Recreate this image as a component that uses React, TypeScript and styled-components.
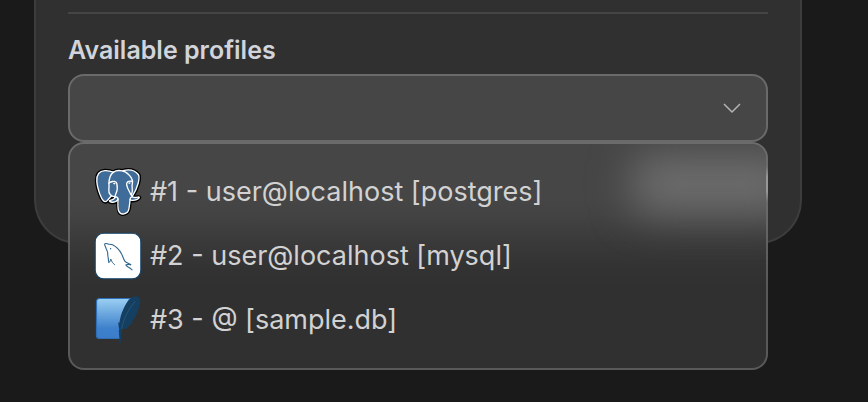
import React, { useState } from "react";
import styled, { createGlobalStyle } from "styled-components";

const GlobalStyle = createGlobalStyle`
  *, *::before, *::after { box-sizing: border-box; }
  body {
    margin: 0;
    background: #1a1a1a;
    color: #d2d2d2;
    font-family: Inter, "Liberation Sans", sans-serif;
  }
`;

const Page = styled.main`
  min-height: 100vh;
  padding: 0 66px 32px 34px;
`;

const Card = styled.section`
  padding: 12px 32px 100px;
  border: 2px solid #3d3d3d;
  border-top: 0;
  border-radius: 0 0 44px 44px;
  background: #303030;
`;

const Divider = styled.hr`
  height: 2px;
  margin: 0 0 20px;
  border: 0;
  background: #454545;
`;

const Label = styled.label`
  display: block;
  margin-bottom: 8px;
  color: #d1d5db;
  font-size: 25px;
  font-weight: 600;
  line-height: 32px;
`;

const Dropdown = styled.div`
  position: relative;
`;

const Field = styled.div`
  display: grid;
  align-items: center;

  > * { grid-area: 1 / 1; }
`;

const Select = styled.select`
  appearance: none;
  width: 100%;
  height: 68px;
  padding: 0 72px 0 24px;
  border: 2px solid #6a6a6a;
  border-radius: 16px;
  outline: none;
  background: #464646;
  color: inherit;
  font: inherit;
  font-size: 27px;
`;

const Chevron = styled.svg`
  justify-self: end;
  width: 20px;
  height: 12px;
  margin-right: 26px;
  fill: none;
  stroke: #b4b4b4;
  stroke-width: 1.5;
  pointer-events: none;
`;

const Menu = styled.ul`
  position: absolute;
  z-index: 1;
  top: 100%;
  left: 0;
  right: 0;
  overflow: hidden;
  margin: 0;
  padding: 16px 0;
  border: 2px solid rgba(255, 255, 255, 0.2);
  border-radius: 16px;
  background:
    linear-gradient(transparent, rgba(255, 255, 255, 0.3) 30% 70%, transparent) right 24px / 2px 36px no-repeat border-box,
    linear-gradient(#464646 24%, #434343 32%, #393939 45%, #323232 56%, #303030 64%) border-box;
  list-style: none;

  &::before {
    content: "";
    position: absolute;
    top: 10px;
    right: -30px;
    width: 164px;
    height: 60px;
    border-radius: 16px;
    background: #6c6c6c;
    filter: blur(20px);
  }
`;

const Option = styled.button`
  position: relative;
  display: flex;
  align-items: center;
  gap: 8px;
  width: 100%;
  height: 64px;
  padding: 0 24px;
  border: 0;
  background: none;
  color: inherit;
  font: inherit;
  font-size: 27px;
  line-height: 36px;
  text-align: left;
  white-space: nowrap;
  cursor: pointer;
`;

const Logo = styled.svg`
  flex: none;
  width: 48px;
  height: 48px;
`;

const PostgresLogo = () => (
  <Logo viewBox="-7 0 446 446" aria-hidden="true">
    <path
      fill="#000"
      stroke="#000"
      strokeWidth="37"
      d="M323.205,324.227c2.833-23.601,1.984-27.062,19.563-23.239l4.463,0.392c13.517,0.615,31.199-2.174,41.587-7c22.362-10.376,35.622-27.7,13.572-23.148c-50.297,10.376-53.755-6.655-53.755-6.655c53.111-78.803,75.313-178.836,56.149-203.322C352.514-5.534,262.036,26.049,260.522,26.869l-0.482,0.089c-9.938-2.062-21.06-3.294-33.554-3.496c-22.761-0.374-40.032,5.967-53.133,15.904c0,0-161.408-66.498-153.899,83.628c1.597,31.936,45.777,241.655,98.47,178.31c19.259-23.163,37.871-42.748,37.871-42.748c9.242,6.14,20.307,9.272,31.912,8.147l0.897-0.765c-0.281,2.876-0.157,5.689,0.359,9.019c-13.572,15.167-9.584,17.83-36.723,23.416c-27.457,5.659-11.326,15.734-0.797,18.367c12.768,3.193,42.305,7.716,62.268-20.224l-0.795,3.188c5.325,4.26,4.965,30.619,5.72,49.452c0.756,18.834,2.017,36.409,5.856,46.771c3.839,10.36,8.369,37.05,44.036,29.406c29.809-6.388,52.6-15.582,54.677-101.107"
    />
    <path
      fill="#3f6c99"
      d="M402.395,271.23c-50.302,10.376-53.76-6.655-53.76-6.655c53.111-78.808,75.313-178.843,56.153-203.326c-52.27-66.785-142.752-35.2-144.262-34.38l-0.486,0.087c-9.938-2.063-21.06-3.292-33.56-3.496c-22.761-0.373-40.026,5.967-53.127,15.902c0,0-161.411-66.495-153.904,83.63c1.597,31.938,45.776,241.657,98.471,178.312c19.26-23.163,37.869-42.748,37.869-42.748c9.243,6.14,20.308,9.272,31.908,8.147l0.901-0.765c-0.28,2.876-0.152,5.689,0.361,9.019c-13.575,15.167-9.586,17.83-36.723,23.416c-27.459,5.659-11.328,15.734-0.796,18.367c12.768,3.193,42.307,7.716,62.266-20.224l-0.796,3.188c5.319,4.26,9.054,27.711,8.428,48.969c-0.626,21.259-1.044,35.854,3.147,47.254c4.191,11.4,8.368,37.05,44.042,29.406c29.809-6.388,45.256-22.942,47.405-50.555c1.525-19.631,4.976-16.729,5.194-34.28l2.768-8.309c3.192-26.611,0.507-35.196,18.872-31.203l4.463,0.392c13.517,0.615,31.208-2.174,41.591-7c22.358-10.376,35.618-27.7,13.573-23.148z"
    />
    <g fill="none" stroke="#fff" strokeWidth="12.5" strokeLinecap="round" strokeLinejoin="round">
      <path d="M215.866,286.484c-1.385,49.516,0.348,99.377,5.193,111.495c4.848,12.118,15.223,35.688,50.9,28.045c29.806-6.39,40.651-18.756,45.357-46.051c3.466-20.082,10.148-75.854,11.005-87.281" />
      <path d="M173.104,38.256c0,0-161.521-66.016-154.012,84.109c1.597,31.938,45.779,241.664,98.473,178.316c19.256-23.166,36.671-41.335,36.671-41.335" />
      <path d="M260.349,26.207c-5.591,1.753,89.848-34.889,144.087,34.417c19.159,24.484-3.043,124.519-56.153,203.329" />
      <path d="M348.282,263.953c0,0,3.461,17.036,53.764,6.653c22.04-4.552,8.776,12.774-13.577,23.155c-18.345,8.514-59.474,10.696-60.146-1.069c-1.729-30.355,21.647-21.133,19.96-28.739c-1.525-6.85-11.979-13.573-18.894-30.338c-6.037-14.633-82.796-126.849,21.287-110.183c3.813-0.789-27.146-99.002-124.553-100.599c-97.385-1.597-94.19,119.762-94.19,119.762" />
      <path d="M188.604,274.334c-13.577,15.166-9.584,17.829-36.723,23.417c-27.459,5.66-11.326,15.733-0.797,18.365c12.768,3.195,42.307,7.718,62.266-20.229c6.078-8.509-0.036-22.086-8.385-25.547c-4.034-1.671-9.428-3.765-16.361,3.994z" />
      <path d="M187.715,274.069c-1.368-8.917,2.93-19.528,7.536-31.942c6.922-18.626,22.893-37.255,10.117-96.339c-9.523-44.029-73.396-9.163-73.436-3.193c-0.039,5.968,2.889,30.26-1.067,58.548c-5.162,36.913,23.488,68.132,56.479,64.938" />
      <path d="M350.676,123.432c0.863,15.994-3.445,26.888-3.988,43.914c-0.804,24.748,11.799,53.074-7.191,81.435" />
    </g>
    <g fill="#fff" stroke="#fff" strokeWidth="4">
      <path d="M172.517,141.7c-0.288,2.039,3.733,7.48,8.976,8.207c5.234,0.73,9.714-3.522,9.998-5.559c0.284-2.039-3.732-4.285-8.977-5.015c-5.237-0.731-9.719,0.333-9.996,2.367z" />
      <path d="M331.941,137.543c0.284,2.039-3.732,7.48-8.976,8.207c-5.238,0.73-9.718-3.522-10.005-5.559c-0.277-2.039,3.74-4.285,8.979-5.015c5.239-0.73,9.718,0.333,10.002,2.368z" />
    </g>
  </Logo>
);

const MysqlLogo = () => (
  <Logo viewBox="0 0 48 48" aria-hidden="true">
    <rect x="1.2" y="1.2" width="45.6" height="45.6" rx="8.5" fill="#fff" stroke="#16456a" strokeWidth="1.1" />
    <g fill="none" stroke="#2f678f" strokeWidth="1.1" strokeLinecap="round" strokeLinejoin="round">
      <path d="M14.9 30.4c-.7-2-.4-4.200-1-6.200c-.3-1.800.1-3.200-.6-5c-.5-1.400-1.300-2.400-1.600-3.900c-.4-1.300-1.400-2.200-1-3.200c.5-1.100 2.500-.6 3.900.1c1.200.1 2.500-.1 3.900.600c3.900 1.900 7.100 5.500 9.100 9.200c1.300 2.400 1.700 5.200 3.400 7.300c1.300 1.600 3.800 2 5.700 3.400" />
      <path d="M36.700 32.700c-1.700-.4-3.700-.3-4.900.4c.6 1.200 2 1.700 3.200 2.500c1.200.7 2 1.400 3 2.200" />
      <path d="M14.900 30.400c1.200-.2 1.400-1.800 1.900-3.300c.6 1.500 1 2.600 1.900 3.600c.5.700 1.200 1.300 1.900 2" strokeWidth="1" />
    </g>
    <circle cx="16.600" cy="16.700" r=".7" fill="#2f678f" />
  </Logo>
);

const SqliteLogo = () => (
  <Logo viewBox="0 0 48 48" aria-hidden="true">
    <defs>
      <linearGradient id="sqlite-page" x1="0" y1="0" x2="0" y2="1">
        <stop offset="0" stopColor="#9bd0f3" />
        <stop offset=".75" stopColor="#3d80cb" />
        <stop offset="1" stopColor="#3b7dc8" />
      </linearGradient>
    </defs>
    <path
      d="M36 2.500H5.500a3 3 0 0 0-3 3v34a3 3 0 0 0 3 3h20.500c-1-14 2.500-29.500 10-40z"
      fill="url(#sqlite-page)"
      stroke="#2f6fb8"
      strokeWidth="1.200"
    />
    <path
      d="M44.900 1.600c-2.900-2.400-6.300-1.200-9.300 2c-5.400 5.600-9 15.200-10.200 23.300c-.9-1.200-1.200-.3-1 1.600l1 5.900l-.700-.3c.5 4.100.700 8.200 1.100 12.900h.9c.3-4.600.600-9.300 1.400-14c2.300.2 5-.1 6.400-2.300l-1.100-.2c2.400-.5 4.500-3 5.800-5.600l-1.600.3c3.400-2.200 4.700-5.800 6.600-11.200c2.400-6.200 2.900-10.600.7-12.400z"
      fill="#143f61"
    />
    <path d="M41.400 5.400c-6 6.500-11.600 16-13.800 27.600" fill="none" stroke="#285b7d" strokeWidth=".8" />
  </Logo>
);

const profiles = [
  { id: "1", name: "#1 - user@localhost [postgres]", Icon: PostgresLogo },
  { id: "2", name: "#2 - user@localhost [mysql]", Icon: MysqlLogo },
  { id: "3", name: "#3 - @ [sample.db]", Icon: SqliteLogo },
];

export default function App() {
  const [open, setOpen] = useState(true);
  const [selected, setSelected] = useState("");

  return (
    <>
      <GlobalStyle />
      <Page>
        <Card>
          <Divider />
          <Label htmlFor="profile">Available profiles</Label>
          <Dropdown>
            <Field>
              <Select
                id="profile"
                value={selected}
                onChange={(event) => setSelected(event.target.value)}
                onMouseDown={(event) => {
                  event.preventDefault();
                  setOpen(!open);
                }}
              >
                <option value="" />
                {profiles.map(({ id, name }) => (
                  <option key={id} value={id}>{name}</option>
                ))}
              </Select>
              <Chevron viewBox="0 0 20 12" aria-hidden="true">
                <path d="M2 2l8 8 8-8" />
              </Chevron>
            </Field>
            {open && (
              <Menu>
                {profiles.map(({ id, name, Icon }) => (
                  <li key={id}>
                    <Option
                      type="button"
                      onClick={() => {
                        setSelected(id);
                        setOpen(false);
                      }}
                    >
                      <Icon />
                      {name}
                    </Option>
                  </li>
                ))}
              </Menu>
            )}
          </Dropdown>
        </Card>
      </Page>
    </>
  );
}
